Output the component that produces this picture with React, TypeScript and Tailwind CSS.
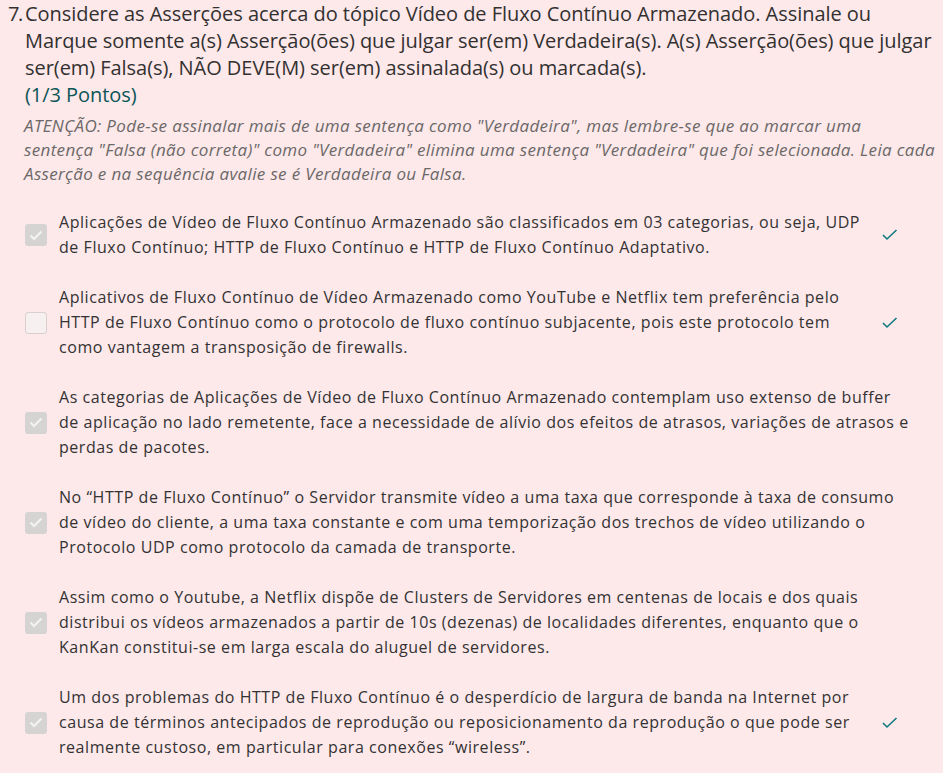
import React from 'react';

type Assertion = {
  lines: string[];
  checked: boolean;
  correct: boolean;
};

const assertions: Assertion[] = [
  {
    lines: [
      'Aplicações de Vídeo de Fluxo Contínuo Armazenado são classificados em 03 categorias, ou seja, UDP',
      'de Fluxo Contínuo; HTTP de Fluxo Contínuo e HTTP de Fluxo Contínuo Adaptativo.',
    ],
    checked: true,
    correct: true,
  },
  {
    lines: [
      'Aplicativos de Fluxo Contínuo de Vídeo Armazenado como YouTube e Netflix tem preferência pelo',
      'HTTP de Fluxo Contínuo como o protocolo de fluxo contínuo subjacente, pois este protocolo tem',
      'como vantagem a transposição de firewalls.',
    ],
    checked: false,
    correct: true,
  },
  {
    lines: [
      'As categorias de Aplicações de Vídeo de Fluxo Contínuo Armazenado contemplam uso extenso de buffer',
      'de aplicação no lado remetente, face a necessidade de alívio dos efeitos de atrasos, variações de atrasos e',
      'perdas de pacotes.',
    ],
    checked: true,
    correct: false,
  },
  {
    lines: [
      'No “HTTP de Fluxo Contínuo” o Servidor transmite vídeo a uma taxa que corresponde à taxa de consumo',
      'de vídeo do cliente, a uma taxa constante e com uma temporização dos trechos de vídeo utilizando o',
      'Protocolo UDP como protocolo da camada de transporte.',
    ],
    checked: true,
    correct: false,
  },
  {
    lines: [
      'Assim como o Youtube, a Netflix dispõe de Clusters de Servidores em centenas de locais e dos quais',
      'distribui os vídeos armazenados a partir de 10s (dezenas) de localidades diferentes, enquanto que o',
      'KanKan constitui-se em larga escala do aluguel de servidores.',
    ],
    checked: true,
    correct: false,
  },
  {
    lines: [
      'Um dos problemas do HTTP de Fluxo Contínuo é o desperdício de largura de banda na Internet por',
      'causa de términos antecipados de reprodução ou reposicionamento da reprodução o que pode ser',
      'realmente custoso, em particular para conexões “wireless”.',
    ],
    checked: true,
    correct: true,
  },
];

const CheckBox: React.FC<{ checked: boolean }> = ({ checked }) =>
  checked ? (
    <div className="w-[22px] h-[22px] rounded-[3px] bg-[#d6d3d3] flex items-center justify-center shrink-0">
      <svg width="14" height="11" viewBox="0 0 14 11" fill="none">
        <path d="M1.5 5.5 L5 9 L12.5 1.5" stroke="#f4f1f1" strokeWidth="2.2" />
      </svg>
    </div>
  ) : (
    <div className="w-[22px] h-[22px] rounded-[3px] bg-[#f7f0f0] border border-[#d8cfcf] shrink-0" />
  );

const App: React.FC = () => {
  return (
    <div
      className="min-h-screen bg-[#fde8ea] text-[#323130] pl-2 pr-2"
      style={{ fontFamily: '"Open Sans", "Noto Sans", sans-serif' }}
    >
      {/* Question title */}
      <div className="flex text-[20px] leading-[27px]">
        <span className="w-[17px] shrink-0 tracking-[-1.5px]">7.</span>
        <div className="flex-1 whitespace-nowrap tracking-[-0.05px]">
          <div>Considere as Asserções acerca do tópico Vídeo de Fluxo Contínuo Armazenado. Assinale ou</div>
          <div>Marque somente a(s) Asserção(ões) que julgar ser(em) Verdadeira(s). A(s) Asserção(ões) que julgar</div>
          <div>ser(em) Falsa(s), NÃO DEVE(M) ser(em) assinalada(s) ou marcada(s).</div>
          <div className="text-[#0b5656]">(1/3 Pontos)</div>
        </div>
      </div>

      <div className="ml-4 mt-[6px] text-[17px] leading-[24px] tracking-[0.35px] italic text-[#6b6868] whitespace-nowrap">
        <div>ATENÇÃO: Pode-se assinalar mais de uma sentença como "Verdadeira", mas lembre-se que ao marcar uma</div>
        <div>sentença "Falsa (não correta)" como "Verdadeira" elimina uma sentença "Verdadeira" que foi selecionada. Leia cada</div>
        <div>Asserção e na sequência avalie se é Verdadeira ou Falsa.</div>
      </div>

      {/* Assertions */}
      <div className="mt-6 flex flex-col gap-[25px] pl-[17px] w-[890px]">
        {assertions.map((a, i) => (
          <div key={i} className="flex items-center">
            <CheckBox checked={a.checked} />
            <div className="flex-1 ml-3 text-[16px] leading-[25px] tracking-[0.55px] text-[#333] whitespace-nowrap">
              {a.lines.map((l, j) => (
                <div key={j}>{l}</div>
              ))}
            </div>
            {a.correct && (
              <div className="w-[34px] shrink-0 flex justify-end">
                <svg width="16" height="12" viewBox="0 0 16 12" fill="none">
                  <path d="M1 6 L5 10 L14.5 1" stroke="#0e7a80" strokeWidth="1.6" />
                </svg>
              </div>
            )}
          </div>
        ))}
      </div>
    </div>
  );
};

export default App;
